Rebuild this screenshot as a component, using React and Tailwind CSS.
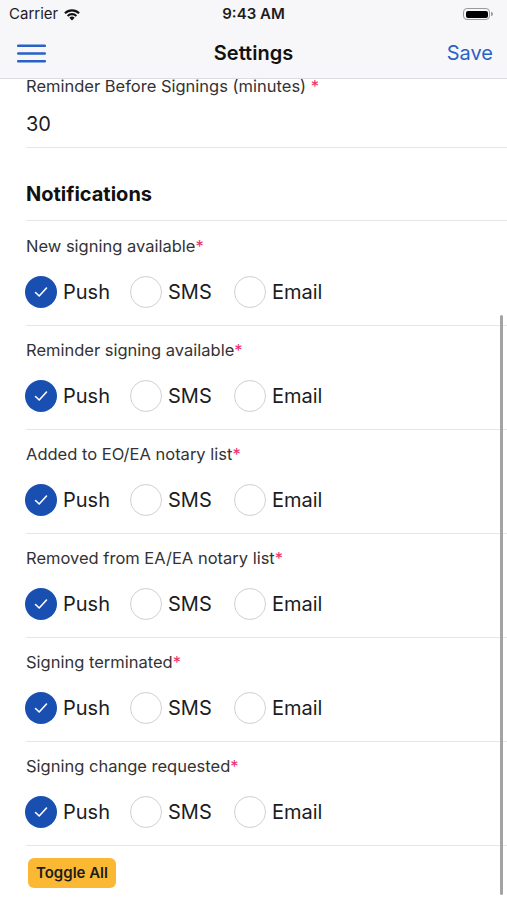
import React from "react";

const sections = [
  "New signing available",
  "Reminder signing available",
  "Added to EO/EA notary list",
  "Removed from EA/EA notary list",
  "Signing terminated",
  "Signing change requested",
];

function Radio({ checked, label, wide }) {
  return (
    <div className={`flex items-center ${wide ? "w-[105px]" : "w-[104px]"}`}>
      {checked ? (
        <div className="w-[32px] h-[32px] rounded-full bg-[#1a4fb2] flex items-center justify-center shrink-0">
          <svg width="18" height="18" viewBox="0 0 18 18" fill="none">
            <path d="M3.5 9.5 L7.2 13 L14.5 5" stroke="white" strokeWidth="1.6" strokeLinecap="round" strokeLinejoin="round" />
          </svg>
        </div>
      ) : (
        <div className="w-[32px] h-[32px] rounded-full border-[1.5px] border-[#d2d2d4] bg-white shrink-0" />
      )}
      <span className="ml-[6px] text-[20px] leading-[24px] text-[#1c1c1e]">{label}</span>
    </div>
  );
}

function Section({ title, first }) {
  return (
    <div className={`${first ? "pt-[15px]" : "pt-[14px]"} pb-[17px] border-b border-[#e6e6e8]`}>
      <div className="h-[20px] leading-[20px] text-[16.5px] text-[#333336]">
        {title}
        <span className="text-[#e8336b]">*</span>
      </div>
      <div className="mt-[20px] flex items-center -ml-px">
        <Radio checked label="Push" wide />
        <Radio label="SMS" />
        <Radio label="Email" />
      </div>
    </div>
  );
}

export default function App() {
  return (
    <div
      className="relative w-full h-[900px] overflow-hidden bg-white"
      style={{ fontFamily: "Inter, 'Noto Sans', Roboto, sans-serif" }}
    >
      {/* Status bar */}
      <div className="h-[28px] bg-[#f7f7f9] flex items-center justify-between px-[9px] relative">
        <div className="flex items-center gap-[5px]">
          <span className="text-[15px] text-[#1c1c1e]">Carrier</span>
          <svg width="18" height="13" viewBox="0 0 18 13">
            <path d="M9 12.5 L6.4 9.7 A3.7 3.7 0 0 1 11.6 9.7 Z" fill="#111" />
            <path d="M3.9 7.2 A7.2 7.2 0 0 1 14.1 7.2 L12.6 8.7 A5.1 5.1 0 0 0 5.4 8.7 Z" fill="#111" />
            <path d="M1.2 4.5 A11 11 0 0 1 16.8 4.5 L15.3 6 A8.9 8.9 0 0 0 2.7 6 Z" fill="#111" />
          </svg>
        </div>
        <span className="absolute left-1/2 -translate-x-1/2 text-[15px] font-semibold text-[#1c1c1e]">9:43 AM</span>
        <div className="flex items-center pr-[5px]">
          <div className="w-[27px] h-[12px] rounded-[4px] border border-[#9a9a9a] p-[1.5px]">
            <div className="w-full h-full rounded-[2px] bg-black" />
          </div>
          <div className="w-[2px] h-[4px] bg-[#9a9a9a] rounded-r-sm ml-[1px]" />
        </div>
      </div>

      {/* Nav bar */}
      <div className="h-[51px] bg-[#f7f7f9] border-b border-[#dcdce0] flex items-center justify-between pl-[17px] pr-[14px] relative">
        <svg width="29" height="19" viewBox="0 0 29 19">
          <rect x="0" y="0.5" width="29" height="2.6" rx="1.2" fill="#2a62c4" />
          <rect x="0" y="8.2" width="29" height="2.6" rx="1.2" fill="#2a62c4" />
          <rect x="0" y="15.9" width="29" height="2.6" rx="1.2" fill="#2a62c4" />
        </svg>
        <span className="absolute left-1/2 -translate-x-1/2 text-[20px] font-semibold text-[#111]">Settings</span>
        <span className="text-[20px] text-[#2a62c4]">Save</span>
      </div>

      {/* Content */}
      <div className="pl-[26px]">
        <div className="h-[16px] leading-[14px] text-[16.5px] text-[#333336]">
          Reminder Before Signings (minutes) <span className="text-[#e8336b]">*</span>
        </div>
        <div className="pt-[17px] pb-[11px] border-b border-[#e6e6e8]">
          <div className="h-[24px] leading-[24px] text-[20px] text-[#1c1c1e]">30</div>
        </div>
        <div className="pt-[34px] pb-[14px] border-b border-[#e6e6e8]">
          <div className="h-[24px] leading-[24px] text-[20px] font-bold text-[#111]">Notifications</div>
        </div>
        {sections.map((s, i) => (
          <Section key={s} title={s} first={i === 0} />
        ))}
        <div className="pt-[12px]">
          <button className="ml-[2px] h-[30px] px-[8px] rounded-[6px] bg-[#fbb833] text-[15px] font-semibold text-[#1c1c1e]">
            Toggle All
          </button>
        </div>
      </div>

      {/* Scrollbar */}
      <div className="absolute right-[4px] top-[315px] bottom-[5px] w-[3px] rounded-full bg-[#a3a3a3]" />
    </div>
  );
}
